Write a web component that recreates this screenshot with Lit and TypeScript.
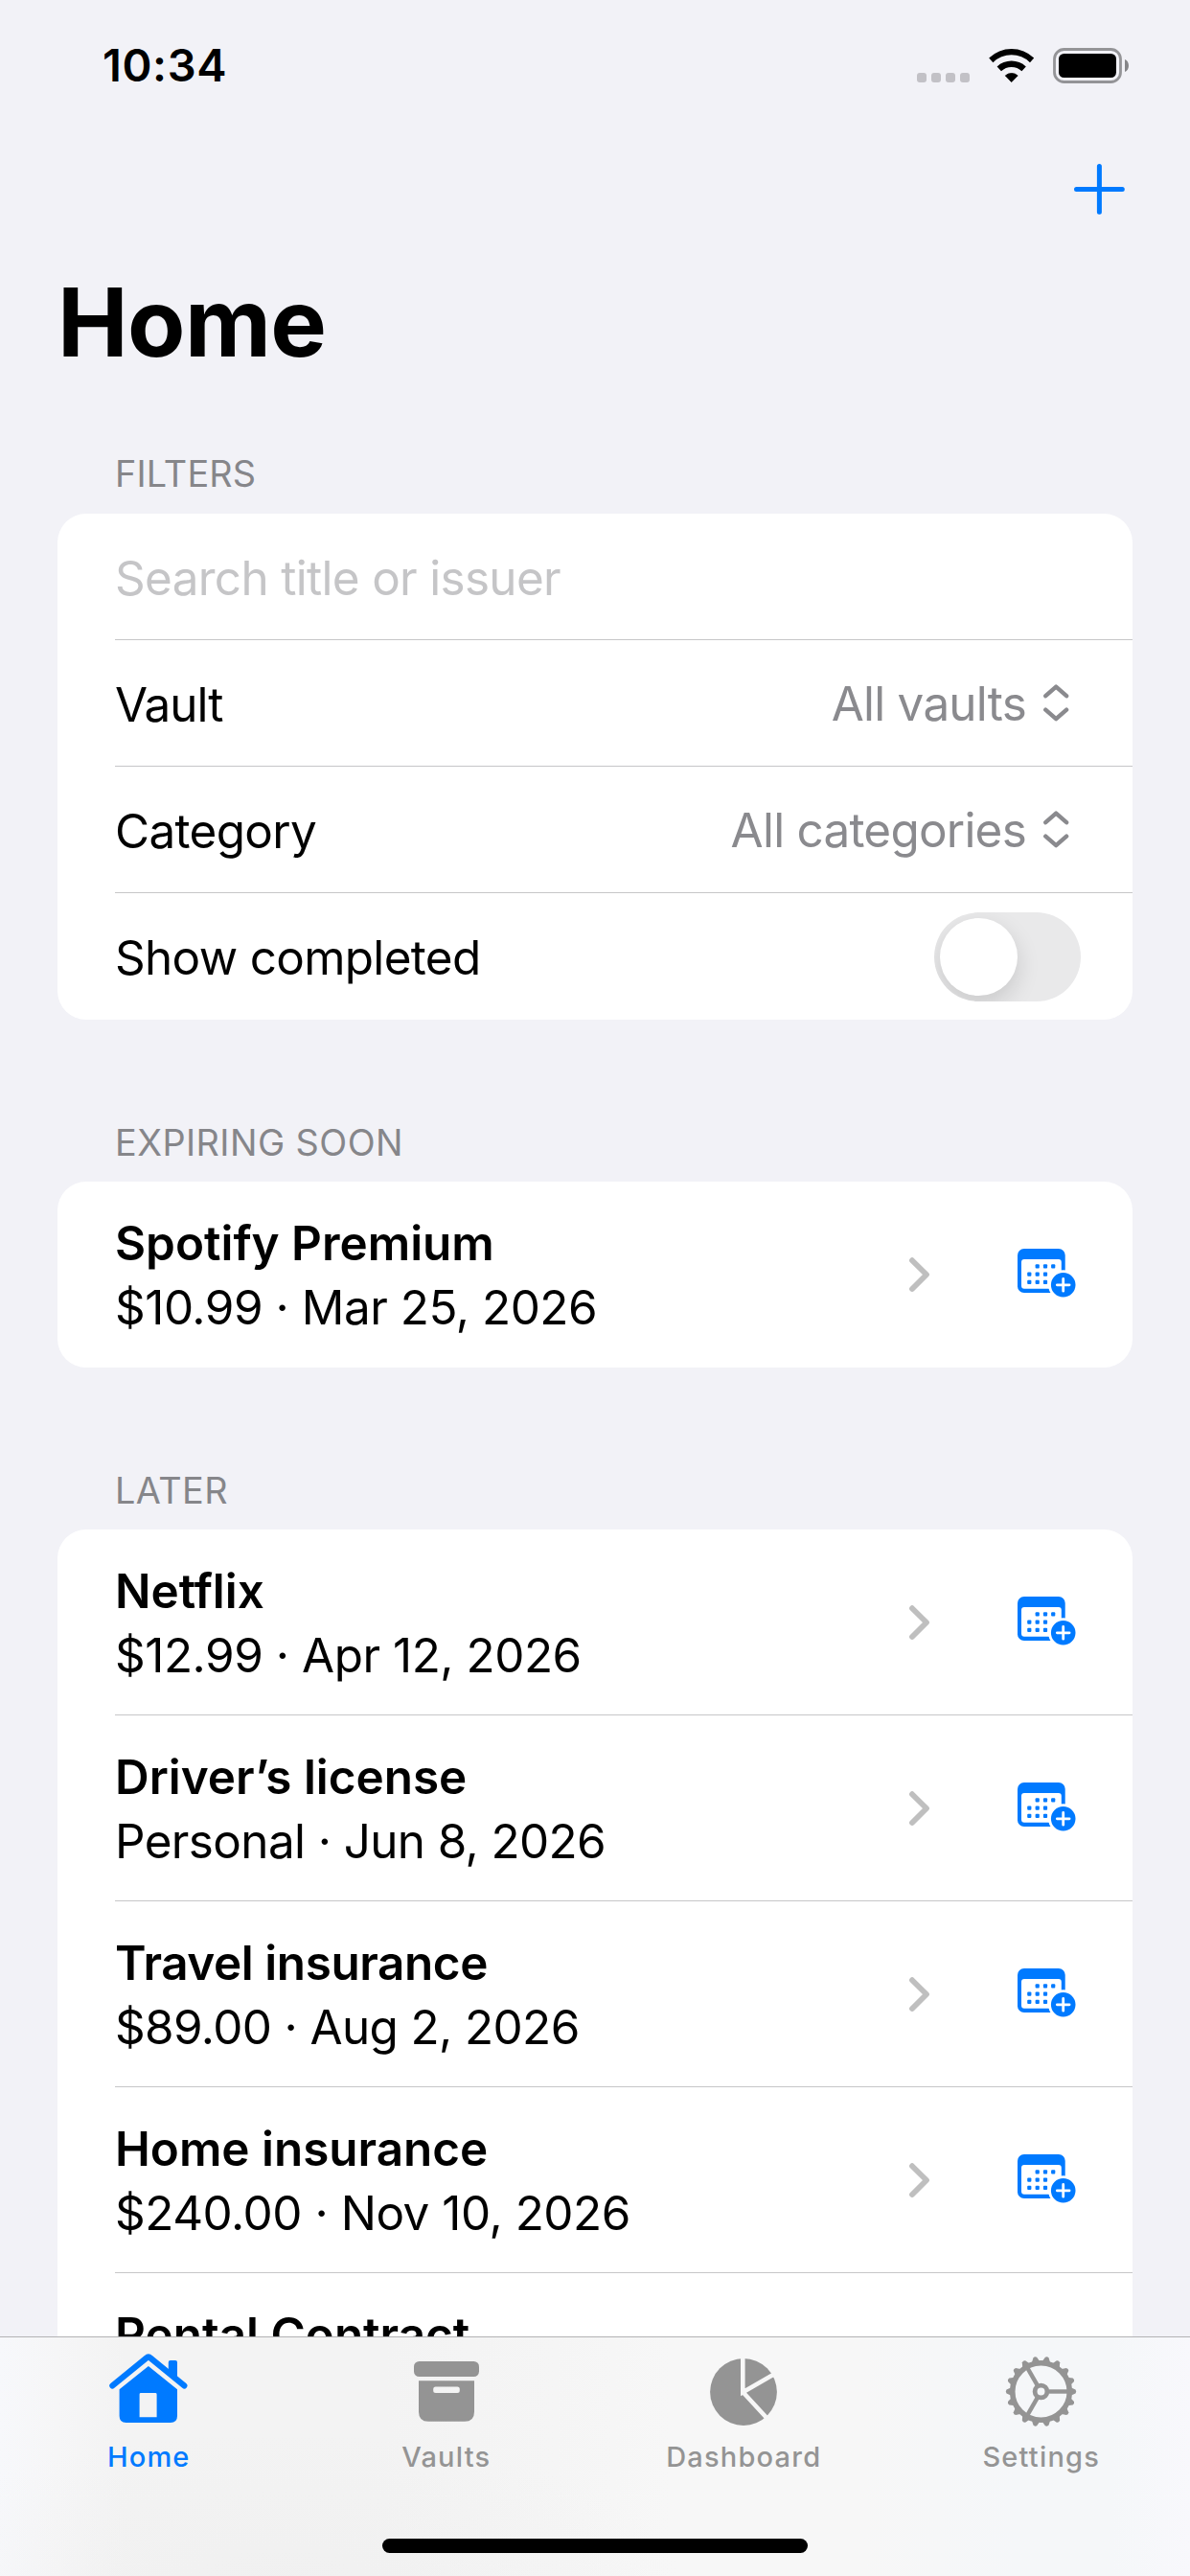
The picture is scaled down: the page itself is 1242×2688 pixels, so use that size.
import { LitElement, html, svg, css, nothing } from "lit";
import { customElement, property } from "lit/decorators.js";
import { classMap } from "lit/directives/class-map.js";

interface Item {
  title: string;
  detail?: string;
  tight?: boolean;
  snug?: boolean;
}

const EXPIRING: Item[] = [{ title: "Spotify Premium", detail: "$10.99 · Mar 25, 2026" }];

const LATER: Item[] = [
  { title: "Netflix", detail: "$12.99 · Apr 12, 2026" },
  { title: "Driver’s license", detail: "Personal · Jun 8, 2026", snug: true },
  { title: "Travel insurance", detail: "$89.00 · Aug 2, 2026", tight: true, snug: true },
  { title: "Home insurance", detail: "$240.00 · Nov 10, 2026" },
  { title: "Rental Contract" },
];

const TOOTH_ANGLES = Array.from({ length: 18 }, (_, i) => i * 20);

const wifiIcon = html`<svg width="48" height="37" viewBox="0 0 48 37">
  <path d="M0.2 10.4 A34 34 0 0 1 47.2 10.4 L43 15.2 A27.6 27.6 0 0 0 4.4 15.2 Z" fill="#000" />
  <path d="M8.6 19.4 A22.2 22.2 0 0 1 38.8 19.4 L34.4 24.2 A15.6 15.6 0 0 0 13 24.2 Z" fill="#000" />
  <path d="M17.3 28.9 A9.8 9.8 0 0 1 30.2 28.9 L23.7 35.6 Z" fill="#000" stroke="#000" stroke-width="0.8" stroke-linejoin="round" />
</svg>`;

const batteryIcon = html`<svg width="80" height="37" viewBox="0 0 80 37">
  <rect x="1.5" y="1.5" width="69" height="34" rx="10" fill="none" stroke="#949497" stroke-width="2.8" />
  <rect x="6" y="6" width="60" height="25" rx="5.5" fill="#000" />
  <path d="M75 12 C80.3 14 80.3 23 75 25 Z" fill="#858588" />
</svg>`;

const plusIcon = html`<svg width="53" height="53" viewBox="0 0 53 53">
  <path d="M26.4 2.5 V50.3 M2.5 26.4 H50.3" stroke="#007aff" stroke-width="5" stroke-linecap="round" fill="none" />
</svg>`;

const upDownIcon = html`<svg width="27" height="40" viewBox="0 0 27 40">
  <path d="M2.3 12.2 L13.2 2.6 L24.1 12.2 M2.3 26.6 L13.2 36.2 L24.1 26.6" fill="none" stroke="#8a8a8e" stroke-width="4.4" stroke-linecap="round" stroke-linejoin="round" />
</svg>`;

const chevronIcon = html`<svg width="22" height="37" viewBox="0 0 22 37">
  <path d="M3 3.2 L18 18 L3 33" fill="none" stroke="#bfbfbf" stroke-width="5.8" stroke-linecap="round" stroke-linejoin="round" />
</svg>`;

const calendarIcon = html`<svg width="61" height="51" viewBox="0 0 61 51">
  <rect width="49.7" height="46" rx="6.8" fill="#007aff" />
  <rect x="4" y="11" width="41.8" height="30.8" rx="3" fill="#fff" />
  <g fill="#007aff">
    ${[
      [20.7, 18.3], [29, 18.3], [37.2, 18.3],
      [12.3, 26.6], [20.7, 26.6], [29, 26.6],
      [12.3, 34.8], [20.7, 34.8], [29, 34.8],
    ].map(([x, y]) => svg`<rect x=${x - 2.1} y=${y - 2.1} width="4.2" height="4.2" rx="1" />`)}
  </g>
  <circle cx="47.7" cy="37.8" r="15.6" fill="#fff" />
  <circle cx="47.7" cy="37.8" r="12.8" fill="#007aff" />
  <path d="M47.7 31.4 V44.2 M41.3 37.8 H54.1" stroke="#fff" stroke-width="2.8" stroke-linecap="round" />
</svg>`;

const homeIcon = html`<svg width="82" height="72" viewBox="0 0 82 72">
  <path d="M61.8 20 V9 Q61.8 7 63.8 7 H69 Q71 7 71 9 V27.5 Z" fill="currentColor" />
  <path d="M3.4 33.4 L38.6 4.7 Q40.9 2.4 43.2 4.7 L78.3 33.4" fill="none" stroke="currentColor" stroke-width="6.3" stroke-linecap="round" />
  <path fill-rule="evenodd" d="M40.9 13 L71 37.3 V65 Q71 72 64 72 H17.6 Q10.6 72 10.6 65 V37.3 Z M33 41 Q31.6 41 31.6 42.4 V66.3 H49.6 V42.4 Q49.6 41 48.2 41 Z" fill="currentColor" />
</svg>`;

const vaultIcon = html`<svg width="68" height="63" viewBox="0 0 68 63">
  <rect width="68" height="16" rx="5.5" fill="currentColor" />
  <path fill-rule="evenodd" d="M5 20.3 H63 V52.7 Q63 62.7 53 62.7 H15 Q5 62.7 5 52.7 Z M22.7 26.4 Q20.2 26.4 20.2 28.9 V30.5 Q20.2 33 22.7 33 H45.3 Q47.8 33 47.8 30.5 V28.9 Q47.8 26.4 45.3 26.4 Z" fill="currentColor" />
</svg>`;

const pieIcon = html`<svg width="70" height="70" viewBox="0 0 70 70">
  <defs>
    <mask id="cuts">
      <rect width="70" height="70" fill="#fff" />
      <path d="M34.3 -3 V35.2 L69 15.2 M34.3 35 L61.5 64.5" fill="none" stroke="#000" stroke-width="4.6" />
    </mask>
  </defs>
  <circle cx="35" cy="35" r="34.9" fill="currentColor" mask="url(#cuts)" />
</svg>`;

const gearIcon = html`<svg width="75" height="75" viewBox="-37.5 -37.5 75 75">
  <circle r="29.8" fill="none" stroke="currentColor" stroke-width="5.6" />
  ${TOOTH_ANGLES.map(
    (a) => svg`<path d="M30.5 -4.6 L36 -1.9 Q37.5 0 36 1.9 L30.5 4.6 Z" fill="currentColor" transform="rotate(${a})" />`
  )}
  <circle r="6.4" fill="none" stroke="currentColor" stroke-width="4.8" />
  ${[0, 120, 240].map(
    (a) => svg`<path d="M8 0 H29" stroke="currentColor" stroke-width="4.4" transform="rotate(${a})" />`
  )}
</svg>`;

@customElement("item-row")
export class ItemRow extends LitElement {
  @property({ attribute: false }) item!: Item;

  static styles = css`
    :host {
      display: flex;
      align-items: center;
      height: 194px;
      box-sizing: border-box;
      padding-right: 59px;
    }
    .text {
      flex: 1;
      min-height: 134px;
      padding-top: 1px;
      font-size: 49.4px;
      line-height: 67px;
      white-space: nowrap;
    }
    .title {
      font-weight: 600;
    }
    .tight {
      letter-spacing: -0.4px;
    }
    .detail {
      letter-spacing: -0.45px;
    }
    .snug {
      letter-spacing: -0.6px;
    }
    svg {
      display: block;
    }
    .chevron {
      margin-right: 91px;
    }
    .calendar {
      margin-bottom: 3px;
    }
  `;

  render() {
    const { title, detail, tight, snug } = this.item;
    return html`
      <div class="text">
        <div class=${classMap({ title: true, tight: !!tight })}>${title}</div>
        ${detail ? html`<div class=${classMap({ detail: true, snug: !!snug })}>${detail}</div>` : nothing}
      </div>
      <div class="chevron">${chevronIcon}</div>
      <div class="calendar">${calendarIcon}</div>
    `;
  }
}

@customElement("list-section")
export class ListSection extends LitElement {
  @property() heading = "";
  @property({ attribute: false }) items: Item[] = [];

  static styles = css`
    :host {
      display: block;
    }
    .heading {
      height: 59px;
      padding-left: 60px;
      font-size: 37.8px;
      line-height: 37px;
      letter-spacing: 0.45px;
      color: #86868a;
    }
    .card {
      background: #fff;
      border-radius: 30px;
      padding-left: 60px;
    }
    .cell {
      background: linear-gradient(#c6c6c8, #c6c6c8) bottom / 100% 1px no-repeat;
    }
    .cell:last-child {
      background: none;
    }
  `;

  render() {
    return html`
      <div class="heading">${this.heading}</div>
      <div class="card">
        ${this.items.map((item) => html`<div class="cell"><item-row .item=${item}></item-row></div>`)}
      </div>
    `;
  }
}

@customElement("app-root")
export class AppRoot extends LitElement {
  static styles = css`
    :host {
      display: block;
      font-family: Inter, "Liberation Sans", sans-serif;
      color: #000;
    }
    svg {
      display: block;
    }
    .screen {
      height: 2688px;
      display: flex;
      flex-direction: column;
      overflow: hidden;
      background: #f2f2f7;
    }
    .status {
      flex: none;
      height: 136px;
      box-sizing: border-box;
      padding: 0 63px 0 107px;
      display: flex;
      justify-content: space-between;
      align-items: center;
    }
    .time {
      font-size: 47px;
      line-height: 60px;
      font-weight: 600;
      letter-spacing: 0.6px;
    }
    .indicators {
      display: flex;
      height: 37px;
    }
    .dots {
      display: flex;
      gap: 5px;
      padding-top: 26px;
      margin-right: 20px;
    }
    .dots i {
      width: 10px;
      height: 10px;
      border-radius: 3px;
      background: #c2c1c6;
    }
    .wifi {
      margin-right: 19px;
    }
    .nav {
      flex: none;
      height: 132px;
      box-sizing: border-box;
      padding: 35px 68px 0 0;
      display: flex;
      justify-content: flex-end;
    }
    h1 {
      flex: none;
      margin: 0;
      height: 188px;
      box-sizing: border-box;
      padding: 8px 0 0 60px;
      font-size: 98.6px;
      line-height: 120px;
      font-weight: 700;
      letter-spacing: -0.6px;
    }
    .content {
      flex: 1;
      min-height: 0;
      overflow: hidden;
      padding: 20px 60px 0;
    }
    .heading {
      height: 60px;
      padding-left: 60px;
      font-size: 37.8px;
      line-height: 37px;
      letter-spacing: 0.2px;
      color: #86868a;
    }
    .card {
      background: #fff;
      border-radius: 30px;
      padding-left: 60px;
    }
    .row {
      height: 132px;
      box-sizing: border-box;
      padding: 2px 54px 0 0;
      display: flex;
      align-items: center;
      justify-content: space-between;
      font-size: 49.4px;
      line-height: 66px;
      letter-spacing: -0.66px;
      background: linear-gradient(#c6c6c8, #c6c6c8) bottom / 100% 1px no-repeat;
    }
    .row:last-child {
      background: none;
    }
    .vault {
      letter-spacing: -1px;
    }
    .placeholder {
      color: #c5c5c7;
    }
    .picker {
      display: flex;
      align-items: center;
      gap: 18px;
      color: #8a8a8e;
      letter-spacing: -0.75px;
      padding: 0 12px 2px 0;
    }
    .toggle {
      width: 153px;
      height: 93px;
      box-sizing: border-box;
      border-radius: 47px;
      background: #e9e9ea;
      padding: 6px;
      margin-bottom: 1px;
      overflow: hidden;
    }
    .knob {
      width: 81px;
      height: 81px;
      border-radius: 50%;
      background: #fff;
      box-shadow: 0 9px 24px rgba(0, 0, 0, 0.14);
    }
    list-section {
      margin-top: 110px;
    }
    .tabbar {
      flex: none;
      height: 250px;
      box-sizing: border-box;
      border-top: 1px solid #b2b2b4;
      background: radial-gradient(ellipse 420px 150px at 290px 250px, rgba(238, 238, 238, 0.5), rgba(240, 240, 240, 0)),
        linear-gradient(90deg, #f7f8fb 0, #f6f6f7 60px, #f3f3f3 130px, #f3f3f3 400px, #f5f5f5 580px, #f7f7f7 700px, #f7f7f7 900px, #f5f7f9 1060px, #f5f7f9 1160px, #f8f8fc 1242px);
      display: flex;
      flex-direction: column;
    }
    .tabs {
      display: grid;
      grid-template-columns: repeat(4, 1fr);
      height: 210px;
    }
    .tab {
      display: flex;
      flex-direction: column;
      align-items: center;
      color: #949494;
      font-size: 29px;
      line-height: 36px;
      font-weight: 500;
      letter-spacing: 1.2px;
    }
    .tab.active {
      color: #007aff;
    }
    .icon {
      height: 107px;
      box-sizing: border-box;
      display: flex;
      flex-direction: column;
      align-items: center;
      justify-content: center;
      padding-top: 6px;
    }
    .active .icon {
      padding: 0 0 1px;
    }
    .indicator {
      width: 444px;
      height: 15px;
      border-radius: 8px;
      background: #000;
      margin: 0 auto;
    }
  `;

  private tab(label: string, icon: unknown, active = false) {
    return html`<div class=${classMap({ tab: true, active })}>
      <div class="icon">${icon}</div>
      <div>${label}</div>
    </div>`;
  }

  render() {
    return html`
      <div class="screen">
        <div class="status">
          <div class="time">10:34</div>
          <div class="indicators">
            <div class="dots"><i></i><i></i><i></i><i></i></div>
            <div class="wifi">${wifiIcon}</div>
            ${batteryIcon}
          </div>
        </div>
        <div class="nav">${plusIcon}</div>
        <h1>Home</h1>
        <div class="content">
          <div class="heading">FILTERS</div>
          <div class="card">
            <div class="row"><span class="placeholder">Search title or issuer</span></div>
            <div class="row">
              <span class="vault">Vault</span>
              <span class="picker">All vaults ${upDownIcon}</span>
            </div>
            <div class="row">
              <span>Category</span>
              <span class="picker">All categories ${upDownIcon}</span>
            </div>
            <div class="row">
              <span>Show completed</span>
              <div class="toggle"><div class="knob"></div></div>
            </div>
          </div>
          <list-section heading="EXPIRING SOON" .items=${EXPIRING}></list-section>
          <list-section heading="LATER" .items=${LATER}></list-section>
        </div>
        <div class="tabbar">
          <div class="tabs">
            ${this.tab("Home", homeIcon, true)} ${this.tab("Vaults", vaultIcon)}
            ${this.tab("Dashboard", pieIcon)} ${this.tab("Settings", gearIcon)}
          </div>
          <div class="indicator"></div>
        </div>
      </div>
    `;
  }
}
